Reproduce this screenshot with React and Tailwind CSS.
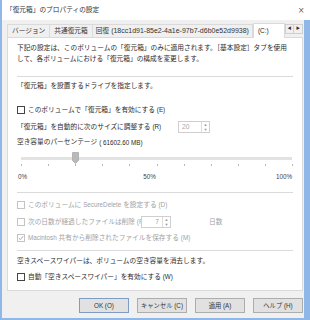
const font = { fontFamily: '"Liberation Sans", "Noto Sans CJK JP", sans-serif' };

function Check({ checked = false, disabled = false }) {
  return (
    <span
      className={`inline-flex w-[8px] h-[8px] mr-[3px] items-center justify-center border bg-white shrink-0 ${
        disabled ? 'border-[#c4c4c4]' : 'border-[#444]'
      }`}
    >
      {checked && (
        <svg width="6" height="6" viewBox="0 0 6 6">
          <path d="M0.8 3.1 L2.4 4.6 L5.2 1.2" fill="none" stroke="#a0a0a0" strokeWidth="0.9" />
        </svg>
      )}
    </span>
  );
}

function Spin({ value, className = '' }) {
  return (
    <div className={`flex h-[12px] border border-[#cfcfcf] bg-white ${className}`}>
      <div className="flex-1 flex items-center px-[3px] text-[#a8a8a8]">{value}</div>
      <div className="w-[8px] border-l border-[#dcdcdc] flex flex-col items-center justify-center text-[#999] leading-none">
        <span className="text-[4px] leading-[5px]">▲</span>
        <span className="text-[4px] leading-[5px]">▼</span>
      </div>
    </div>
  );
}

function Separator() {
  return <div className="h-px bg-[#dadada] ml-[5px] mr-[9px]" />;
}

const ticks = Array.from({ length: 11 }, (_, i) => i);

export default function App() {
  return (
    <div
      className="w-[310px] h-[320px] bg-[#f0f0f0] text-[6.7px] text-[#2b2b2b] border-l-2 border-b-2 border-[#8fb8e8] flex flex-col overflow-hidden"
      style={font}
    >
      {/* title bar */}
      <div className="h-[20px] bg-white flex items-center justify-between pl-[4px] pr-[6px]">
        <span className="text-[#333]">「復元箱」のプロパティの設定</span>
        <span className="text-[10px] text-[#666] font-light">×</span>
      </div>

      <div className="flex-1 flex flex-col pl-[5px] pr-[1px] border-r-[6px] border-[#8fb8e8]">
        {/* tabs */}
        <div className="flex items-end h-[17px]">
          <div className="flex items-center h-[13px] px-[4px] border-t border-l border-[#dadada] text-[#333]">バージョン</div>
          <div className="flex items-center h-[13px] px-[4px] border-t border-l border-[#dadada] text-[#333]">共通復元箱</div>
          <div className="flex items-center h-[13px] px-[3px] border-t border-l border-r border-[#dadada] text-[#333] whitespace-nowrap">
            回復 <span className="ml-[2px] text-[7px]">(18cc1d91-85e2-4a1e-97b7-d6b0e52d9938)</span>
          </div>
          <div className="flex items-center h-[15px] w-[32px] px-[4px] bg-white border-t border-l border-r border-[#dadada] -mb-px relative z-10 text-[6.5px]">
            (C:)
          </div>
          <div className="ml-auto flex h-[10px] self-start mt-[4px]">
            <div className="w-[9px] h-[10px] border border-[#cfcfcf] bg-[#f0f0f0] flex items-center justify-center text-[4px] text-[#333]">◀</div>
            <div className="w-[9px] h-[10px] border border-l-0 border-[#cfcfcf] bg-[#f0f0f0] flex items-center justify-center text-[4px] text-[#333]">▶</div>
          </div>
        </div>

        {/* panel */}
        <div className="h-[254px] bg-white border border-[#dadada] flex flex-col pl-[4px]">
          <div className="pt-[4px] pl-[5px] leading-[11px]">
            <div>下記の設定は、このボリュームの「復元箱」のみに適用されます。［基本設定］タブを使用</div>
            <div>して、各ボリュームにおける「復元箱」の構成を変更します。</div>
          </div>

          <div className="mt-[12px]"><Separator /></div>

          <div className="mt-[4px] h-[11px] flex items-center pl-[5px]">「復元箱」を設置するドライブを指定します。</div>

          <div className="mt-[12px] h-[12px] flex items-center pl-[5px]">
            <Check />
            <span>このボリュームで「復元箱」を有効にする <span className="text-[6.3px]">(E)</span></span>
          </div>

          <div className="mt-[5px] h-[12px] flex items-center pl-[5px]">
            <span className="w-[161px]">「復元箱」を自動的に次のサイズに調整する <span className="text-[6.3px]">(R)</span></span>
            <Spin value="20" className="w-[32px]" />
          </div>

          <div className="mt-[4px] h-[11px] flex items-center pl-[5px]">
            空き容量のパーセンテージ <span className="ml-[2px] text-[6.3px]">( 61602.60 MB)</span>
          </div>

          {/* slider */}
          <div className="mt-[2px] h-[20px] relative ml-[9px] mr-[10px]">
            <div className="absolute left-0 right-0 top-[7px] h-[3px] bg-[#e2e2e2]" />
            <svg className="absolute top-[2px]" style={{ left: '51px' }} width="7" height="12" viewBox="0 0 7 12">
              <path d="M0.5 0.5 H6.5 V8.5 L3.5 11.5 L0.5 8.5 Z" fill="#b9b9b9" stroke="#a9a9a9" strokeWidth="0.8" />
            </svg>
            {ticks.map((i) => (
              <div
                key={i}
                className="absolute top-[14px] w-px h-[2px] bg-[#b8b8b8]"
                style={{ left: `${i * 10}%` }}
              />
            ))}
          </div>

          <div className="mt-[2px] h-[10px] flex items-center justify-between pl-[6px] pr-[10px] text-[6.3px] text-[#444]">
            <span>0%</span>
            <span className="-ml-[4px]">50%</span>
            <span>100%</span>
          </div>

          <div className="mt-[10px]"><Separator /></div>

          <div className="mt-[6px] h-[12px] flex items-center pl-[5px] text-[#a2a2a2]">
            <Check disabled />
            <span>このボリュームに <span className="text-[6.3px]">SecureDelete</span> を設定する <span className="text-[6.3px]">(D)</span></span>
          </div>

          <div className="mt-[5px] h-[12px] flex items-center pl-[5px] text-[#a2a2a2]">
            <Check disabled />
            <span className="w-[115px] whitespace-nowrap overflow-hidden">次の日数が経過したファイルは削除 <span className="text-[6.3px]">(F</span></span>
            <Spin value={<span className="ml-auto">7</span>} className="w-[30px] -ml-[2px]" />
            <span className="ml-[38px]">日数</span>
          </div>

          <div className="mt-[4px] h-[12px] flex items-center pl-[5px] text-[#a2a2a2]">
            <Check checked disabled />
            <span><span className="text-[6.3px]">Macintosh</span> 共有から削除されたファイルを保存する <span className="text-[6.3px]">(M)</span></span>
          </div>

          <div className="mt-[6px]"><Separator /></div>

          <div className="mt-[5px] h-[11px] flex items-center pl-[5px]">空きスペースワイパーは、ボリュームの空き容量を消去します。</div>

          <div className="mt-[4px] h-[12px] flex items-center pl-[5px]">
            <Check />
            <span>自動「空きスペースワイパー」を有効にする <span className="text-[6.3px]">(W)</span></span>
          </div>
        </div>

        {/* buttons */}
        <div className="flex justify-end gap-[8px] mt-[7px]">
          {['OK (O)', 'キャンセル (C)', '適用 (A)', 'ヘルプ (H)'].map((label, i) => (
            <div
              key={label}
              className={`w-[50px] h-[15px] flex items-center justify-center bg-[#e1e1e1] border text-[6.3px] text-[#333] ${
                i === 0 ? 'border-[#7f9dc4]' : 'border-[#adadad]'
              }`}
            >
              {label}
            </div>
          ))}
        </div>
      </div>
    </div>
  );
}
